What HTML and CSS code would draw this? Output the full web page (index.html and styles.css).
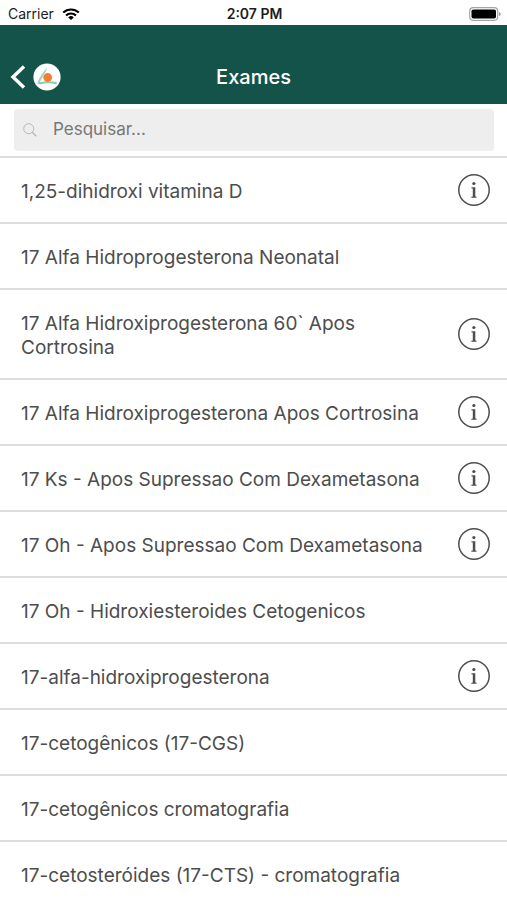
FILE: index.html
```html
<!DOCTYPE html>
<html lang="pt-BR">
<head>
<meta charset="utf-8">
<meta name="viewport" content="width=device-width, initial-scale=1">
<title>Exames</title>
<link rel="stylesheet" href="styles.css">
</head>
<body>
<svg class="defs" width="0" height="0" aria-hidden="true">
  <symbol id="info" viewBox="0 0 32 32">
    <circle cx="16" cy="16" r="15.2" fill="none" stroke="currentColor" stroke-width="1.5"/>
    <circle cx="15.9" cy="9.5" r="1.6" fill="currentColor"/>
    <path d="M13.4 13.200h3.900v9.300l1.300.3v1h-5.300v-1l1.500-.3v-8l-1.400-.3z" fill="currentColor"/>
  </symbol>
</svg>
<div class="status">
  <div class="status-left">
    <span>Carrier</span>
    <svg class="wifi" viewBox="0 0 18 12" aria-hidden="true">
      <g fill="none" stroke="#000" stroke-width="2.1">
        <path d="M1.2 4.6a11.2 11.2 0 0 1 15.6 0"/>
        <path d="M4 7.5a7.2 7.2 0 0 1 10 0"/>
      </g>
      <path d="M9 12 6.2 9.4a4.1 4.1 0 0 1 5.6 0z"/>
    </svg>
  </div>
  <span class="status-time">2:07 PM</span>
  <svg class="battery" viewBox="0 0 32 14" aria-hidden="true">
    <rect x=".7" y=".7" width="28" height="12.6" rx="3.5" fill="#fff" stroke="#a5a5a5" stroke-width="1.2"/>
    <rect x="2.5" y="2.5" width="24.5" height="9" rx="1.8"/>
    <path d="M30.2 5v4.200q1.400-.6 1.400-2.100T30.200 5z" fill="#888"/>
  </svg>
</div>
<header class="nav">
  <button class="back" type="button" aria-label="Voltar">
    <svg class="chevron" viewBox="0 0 16 24" aria-hidden="true"><path d="M14 1.500 3 12l11 10.500" fill="none" stroke="#fff" stroke-width="3.400"/></svg>
    <svg class="logo" viewBox="0 0 28 28" aria-hidden="true">
      <circle cx="14" cy="14" r="13.600" fill="#fff"/>
      <path d="M14.200 4.500C10.500 8.500 6.500 14 4.300 20c1.500 1.700 4 1.300 6.200.6-1.600-.3-3-.9-3.500-1.800C9 15 12.800 10 14.200 4.500z" fill="#a3d6b9"/>
      <path d="M4.500 20.300c5.500-2.300 12-2.300 19.500-1.300l-.6 2.600c-6-1.700-10.500-1.600-15.500-.3z" fill="#8fcdaa"/>
      <circle cx="14.700" cy="14.500" r="4.400" fill="#f47b32"/>
    </svg>
  </button>
  <h1 class="title">Exames</h1>
</header>
<main>
  <form class="search">
    <label class="search-box">
      <svg class="glass" viewBox="0 0 14 14" aria-hidden="true"><g fill="none" stroke="#b8b8b8"><circle cx="5.700" cy="5.700" r="5"/><path d="m9.300 9.300 4 4" stroke-width="1.300"/></g></svg>
      <input class="search-input" type="text" placeholder="Pesquisar..." aria-label="Pesquisar">
    </label>
  </form>
  <ul class="list">
    <li class="row"><span class="name">1,25-dihidroxi vitamina D</span><button class="info" type="button" aria-label="Informações"><svg><use href="#info"/></svg></button></li>
    <li class="row"><span class="name">17 Alfa Hidroprogesterona Neonatal</span></li>
    <li class="row"><span class="name">17 Alfa Hidroxiprogesterona 60` Apos Cortrosina</span><button class="info" type="button" aria-label="Informações"><svg><use href="#info"/></svg></button></li>
    <li class="row"><span class="name">17 Alfa Hidroxiprogesterona Apos Cortrosina</span><button class="info" type="button" aria-label="Informações"><svg><use href="#info"/></svg></button></li>
    <li class="row"><span class="name">17 Ks - Apos Supressao Com Dexametasona</span><button class="info" type="button" aria-label="Informações"><svg><use href="#info"/></svg></button></li>
    <li class="row"><span class="name">17 Oh - Apos Supressao Com Dexametasona</span><button class="info" type="button" aria-label="Informações"><svg><use href="#info"/></svg></button></li>
    <li class="row"><span class="name">17 Oh - Hidroxiesteroides Cetogenicos</span></li>
    <li class="row"><span class="name">17-alfa-hidroxiprogesterona</span><button class="info" type="button" aria-label="Informações"><svg><use href="#info"/></svg></button></li>
    <li class="row"><span class="name">17-cetogênicos (17-CGS)</span></li>
    <li class="row"><span class="name">17-cetogênicos cromatografia</span></li>
    <li class="row"><span class="name">17-cetosteróides (17-CTS) - cromatografia</span></li>
  </ul>
</main>
</body>
</html>
```
FILE: styles.css
```css
* {
  box-sizing: border-box;
}

body {
  margin: 0;
  background: #fff;
  color: #4d4d4d;
  font-family: Inter, "Liberation Sans", sans-serif;
  font-size: 19px;
  line-height: 24px;
}

button {
  padding: 0;
  border: 0;
  background: none;
  color: inherit;
}

svg {
  display: block;
}

.defs {
  position: absolute;
}

.status {
  display: grid;
  grid-template-columns: 1fr auto 1fr;
  align-items: center;
  height: 25px;
  padding: 2px 6px 0 8px;
  color: #1c1c1c;
  font-size: 14px;
}

.status-left {
  display: flex;
  align-items: center;
  gap: 8px;
}

.status-time {
  font-weight: 600;
}

.wifi {
  width: 18px;
  height: 12px;
}

.battery {
  justify-self: end;
  width: 32px;
  height: 14px;
}

.nav {
  display: grid;
  grid-template-columns: 1fr auto 1fr;
  align-items: end;
  height: 79px;
  padding: 0 10px 13px;
  background: #14534a;
}

.back {
  display: flex;
  align-items: center;
  justify-self: start;
  gap: 7px;
}

.chevron {
  width: 16px;
  height: 24px;
}

.logo {
  width: 28px;
  height: 28px;
}

.title {
  margin: 0;
  color: #fff;
  font-size: 20px;
  font-weight: 500;
  line-height: 28px;
}

.search {
  padding: 5px 13px 5px 14px;
}

.search-box {
  display: flex;
  align-items: center;
  gap: 16px;
  height: 42px;
  padding: 0 9px;
  border-radius: 4px;
  background: #eee;
}

.glass {
  flex: none;
  width: 14px;
  height: 14px;
}

.search-input {
  flex: 1;
  min-width: 0;
  padding: 0 0 2px;
  border: 0;
  outline: 0;
  background: none;
  color: #4d4d4d;
  font: inherit;
  font-size: 17px;
}

.search-input::placeholder {
  color: #777;
  opacity: 1;
}

.list {
  margin: 0;
  padding: 0;
  list-style: none;
}

.row {
  display: flex;
  align-items: center;
  gap: 16px;
  padding: 0 17px 0 21px;
  border-top: 2px solid #dcdcdc;
}

.name {
  flex: 1;
  padding: 22px 0 18px;
}

.info {
  flex: none;
}

.info svg {
  width: 32px;
  height: 32px;
}
```
